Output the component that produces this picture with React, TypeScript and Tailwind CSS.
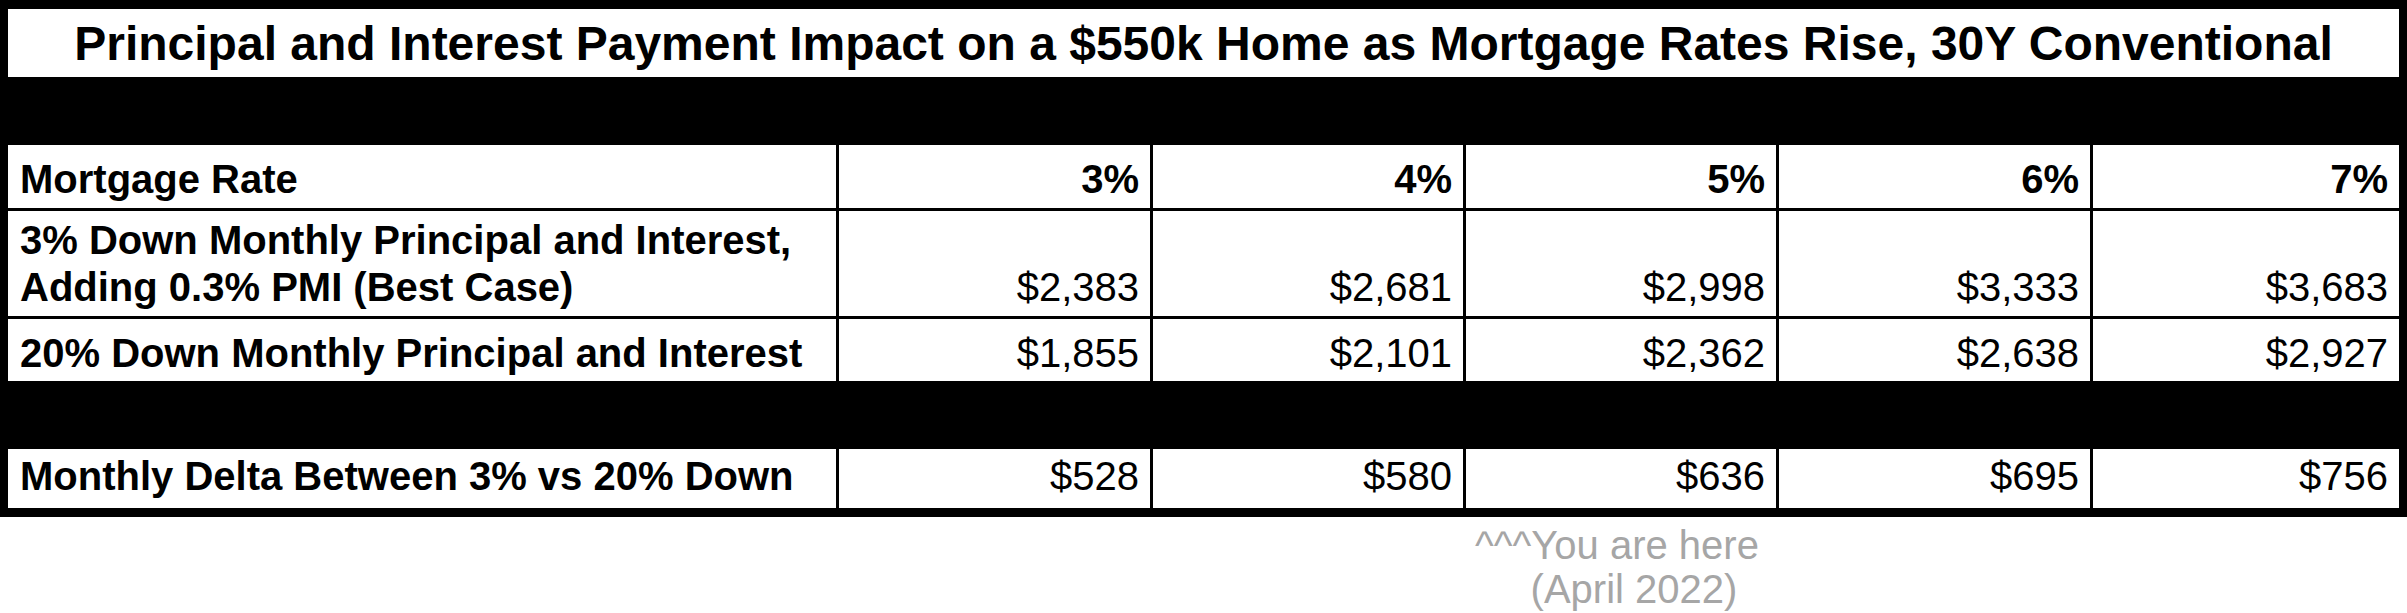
const rates = ['3%', '4%', '5%', '6%', '7%']

const rows = [
  {
    label: ['3% Down Monthly Principal and Interest,', 'Adding 0.3% PMI (Best Case)'],
    values: ['$2,383', '$2,681', '$2,998', '$3,333', '$3,683'],
    h: 'h-[105px]',
  },
  {
    label: ['20% Down Monthly Principal and Interest'],
    values: ['$1,855', '$2,101', '$2,362', '$2,638', '$2,927'],
    h: 'h-[62px]',
  },
]

const delta = ['$528', '$580', '$636', '$695', '$756']

const cols = 'grid grid-cols-[828px_311px_310px_310px_311px_1fr] gap-x-[3px]'

export default function App() {
  return (
    <div className="w-[2407px] bg-white font-['Liberation_Sans',Arial,sans-serif] text-[40px] leading-[47px] text-black">
      {/* Table */}
      <div className="bg-black pt-[9px] pb-[9px] px-[8px]">
        <div className="h-[68px] bg-white flex items-center justify-center font-bold text-[48px]">
          Principal and Interest Payment Impact on a $550k Home as Mortgage Rates Rise, 30Y Conventional
        </div>

        {/* spacer band */}
        <div className="h-[68px]" />

        <div className="flex flex-col gap-y-[3px]">
          {/* Header row */}
          <div className={`${cols} h-[63px]`}>
            <div className="bg-white flex items-center pl-[12px] pt-[6px] font-bold">Mortgage Rate</div>
            {rates.map((r) => (
              <div key={r} className="bg-white flex items-center justify-end pr-[11px] pt-[6px] font-bold">
                {r}
              </div>
            ))}
          </div>

          {rows.map((row, i) => {
            const wrapped = row.label.length > 1
            return (
              <div key={i} className={`${cols} ${row.h}`}>
                <div
                  className={`bg-white flex flex-col justify-center pl-[12px] font-bold ${
                    wrapped ? '' : 'pt-[6px]'
                  }`}
                >
                  {row.label.map((l) => (
                    <span key={l}>{l}</span>
                  ))}
                </div>
                {row.values.map((v) => (
                  <div
                    key={v}
                    className={`bg-white flex justify-end pr-[11px] ${
                      wrapped ? 'items-end pb-[5px]' : 'items-center pt-[6px]'
                    }`}
                  >
                    {v}
                  </div>
                ))}
              </div>
            )
          })}
        </div>

        {/* spacer band */}
        <div className="h-[68px]" />

        {/* Delta row */}
        <div className={`${cols} h-[59px]`}>
          <div className="bg-white flex items-center pl-[12px] pb-[5px] font-bold">
            Monthly Delta Between 3% vs 20% Down
          </div>
          {delta.map((d) => (
            <div key={d} className="bg-white flex items-center justify-end pr-[11px] pb-[5px]">
              {d}
            </div>
          ))}
        </div>
      </div>

      {/* Annotation */}
      <div className="grid grid-cols-[836px_314px_313px_1fr] pt-[6px] leading-[44px] text-[#a6a6a6]">
        <div className="col-start-4 pl-[12px] whitespace-pre">
          <div>^^^You are here</div>
          <div>{'     (April 2022)'}</div>
        </div>
      </div>
    </div>
  )
}
